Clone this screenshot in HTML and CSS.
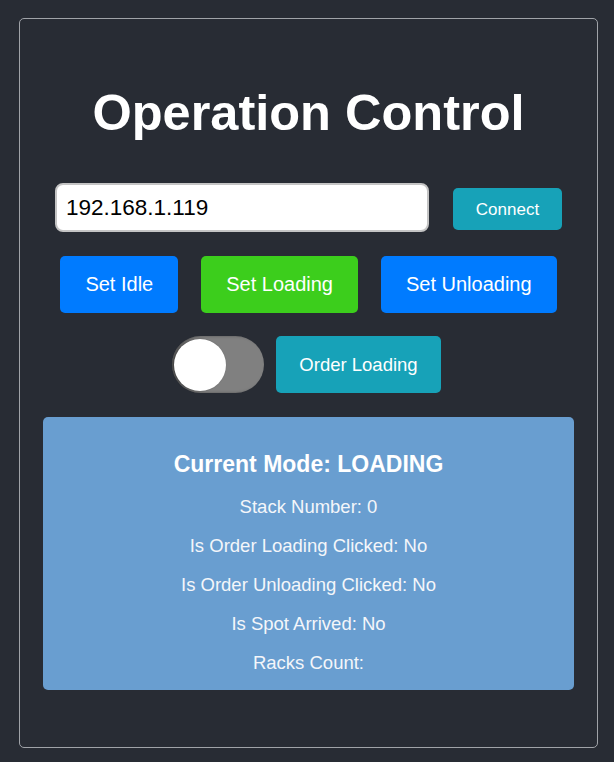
FILE: index.html
```html
<!DOCTYPE html>
<html lang="en">
<head>
  <meta charset="UTF-8" />
  <meta name="viewport" content="width=device-width, initial-scale=1.0"/>
  <title>Operation Control</title>
  <link rel="stylesheet" href="styles.css">
</head>
<body>

  <div class="panel">
    <h1>Operation Control</h1>

    <!-- CONNECTION -->
    <div class="connect-row">
      <input type="text" id="ip-address" class="ip-input" value="192.168.1.119" />
      <button class="btn btn-teal connect-btn">Connect</button>
    </div>

    <!-- MODE BUTTONS -->
    <div class="mode-row">
      <button class="btn btn-blue">Set Idle</button>
      <button class="btn btn-green">Set Loading</button>
      <button class="btn btn-blue">Set Unloading</button>
    </div>

    <!-- ORDER -->
    <div class="order-row">
      <label class="switch">
        <input type="checkbox" id="order-toggle" />
        <span class="slider"></span>
      </label>
      <button class="btn btn-teal order-btn">Order Loading</button>
    </div>

    <!-- STATUS -->
    <div class="status-box">
      <h3>Current Mode: LOADING</h3>
      <p>Stack Number: 0</p>
      <p>Is Order Loading Clicked: No</p>
      <p>Is Order Unloading Clicked: No</p>
      <p>Is Spot Arrived: No</p>
      <p>Racks Count: </p>
    </div>
  </div>

</body>
</html>
```

FILE: styles.css
```css
body {
  font-family: 'Liberation Sans', Arial, sans-serif;
  background-color: #282c34;
  color: #fff;
  margin: 0;
  padding: 18px 0 14px 19px;
}

.panel {
  width: 577px;
  border: 1px solid #a0a3a8;
  border-radius: 5px;
  padding: 66px 0 57px;
  display: flex;
  flex-direction: column;
  align-items: center;
}

.panel h1 {
  font-size: 50.5px;
  line-height: 56px;
  font-weight: bold;
  margin: 0 0 42px;
}

.connect-row {
  display: flex;
  align-items: center;
  gap: 24px;
  margin-bottom: 24px;
}

.ip-input {
  width: 374px;
  height: 49px;
  box-sizing: border-box;
  padding: 0 9px;
  font-family: inherit;
  font-size: 22.5px;
  color: #000;
  background: #fff;
  border: 2px solid #c4c4c4;
  border-radius: 8px;
  outline: none;
}

.btn {
  font-family: inherit;
  font-size: 20px;
  line-height: 23px;
  color: #fff;
  border: none;
  border-radius: 5px;
  height: 57px;
  padding: 0 25px;
  cursor: pointer;
}

.btn-blue {
  background-color: #007bff;
}

.btn-green {
  background-color: #3cce1c;
}

.btn-teal {
  background-color: #17a2b8;
}

.connect-btn {
  font-size: 17px;
  height: 42px;
  width: 109px;
  padding: 0;
  margin-top: 3px;
}

.mode-row {
  display: flex;
  gap: 23px;
  margin-bottom: 23px;
}

.order-row {
  display: flex;
  align-items: center;
  gap: 12px;
  margin-bottom: 24px;
  margin-left: -4px;
}

.order-btn {
  font-size: 18.5px;
  width: 165px;
  padding: 0;
}

/* toggle switch */
.switch {
  position: relative;
  display: inline-block;
  width: 92px;
  height: 57px;
}

.switch input {
  opacity: 0;
  width: 0;
  height: 0;
}

.slider {
  position: absolute;
  inset: 0;
  background-color: #808080;
  border-radius: 29px;
  box-shadow: inset 2px 0 3px rgba(0, 0, 0, 0.35);
}

.slider::before {
  content: "";
  position: absolute;
  width: 52px;
  height: 52px;
  left: 2px;
  top: 2.5px;
  background-color: #fff;
  border-radius: 50%;
  box-shadow: -1px 0 2px rgba(0, 0, 0, 0.4);
}

.switch input:checked + .slider {
  background-color: #3cce1c;
}

.switch input:checked + .slider::before {
  left: 38px;
}

.status-box {
  align-self: stretch;
  margin: 0 23px;
  background-color: #699ed0;
  border-radius: 5px;
  padding: 34px 20px 17px;
  text-align: center;
}

.status-box h3 {
  font-size: 23px;
  line-height: 27px;
  margin: 0 0 18px;
}

.status-box p {
  font-size: 18.5px;
  line-height: 21px;
  margin: 0;
  color: #f4f6fa;
}

.status-box p + p {
  margin-top: 18px;
}
```
